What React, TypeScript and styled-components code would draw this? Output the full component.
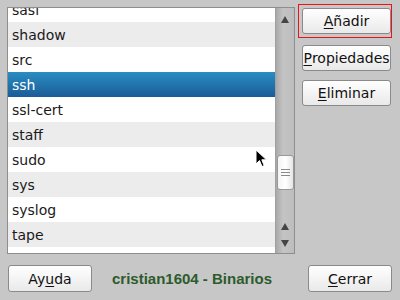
import React from "react";
import styled, { createGlobalStyle } from "styled-components";

const GlobalStyle = createGlobalStyle`
  html, body {
    margin: 0;
    padding: 0;
    background: #c7c7c7;
  }
  * {
    box-sizing: border-box;
  }
`;

const groups = [
  "sasi",
  "shadow",
  "src",
  "ssh",
  "ssl-cert",
  "staff",
  "sudo",
  "sys",
  "syslog",
  "tape",
  "tty",
];

const App: React.FC = () => {
  return (
    <Window>
      <GlobalStyle />
      <TopRow>
        <ListFrame>
          <Viewport>
            <Items>
              {groups.map((g, i) => (
                <Item key={g} $alt={i % 2 === 1} $selected={g === "ssh"}>
                  {g}
                </Item>
              ))}
            </Items>
            <Cursor width="13" height="20" viewBox="0 0 13 20">
              <path
                d="M1 1 L1 15 L4.5 11.5 L7 17.5 L9.2 16.6 L6.8 10.8 L11.5 10.8 Z"
                fill="#000"
                stroke="#fff"
                strokeWidth="1"
                strokeLinejoin="round"
              />
            </Cursor>
          </Viewport>
          <ScrollBar>
            <Arrow $dir="up" />
            <Track>
              <Thumb>
                <Grip />
                <Grip />
                <Grip />
              </Thumb>
            </Track>
            <Arrow $dir="up" />
            <Arrow $dir="down" />
          </ScrollBar>
        </ListFrame>
        <Side>
          <FocusBox>
            <Button $wide>
              <u>A</u>ñadir
            </Button>
          </FocusBox>
          <Button $wide>
            <u>P</u>ropiedades
          </Button>
          <Button $wide>
            <u>E</u>liminar
          </Button>
        </Side>
      </TopRow>
      <Footer>
        <Button>
          Ay<u>u</u>da
        </Button>
        <Title>cristian1604 - Binarios</Title>
        <Button>
          <u>C</u>errar
        </Button>
      </Footer>
    </Window>
  );
};

export default App;

const Window = styled.div`
  width: 400px;
  height: 300px;
  padding: 4px 8px 0 7px;
  display: flex;
  flex-direction: column;
  background: #c7c7c7;
  font-family: "DejaVu Sans", sans-serif;
  overflow: hidden;
`;

const TopRow = styled.div`
  display: flex;
  align-items: flex-start;
`;

const ListFrame = styled.div`
  margin-top: 3px;
  width: 288px;
  height: 247px;
  border: 1px solid #8e8e8e;
  background: #fff;
  display: flex;
`;

const Viewport = styled.div`
  position: relative;
  flex: 1;
  overflow: hidden;
`;

const Items = styled.div`
  margin-top: -11px;
  display: flex;
  flex-direction: column;
`;

const Item = styled.div<{ $alt: boolean; $selected: boolean }>`
  height: 25px;
  padding-left: 4px;
  display: flex;
  align-items: center;
  font-size: 14px;
  color: ${(p) => (p.$selected ? "#fff" : "#1a1a1a")};
  background: ${(p) =>
    p.$selected
      ? "linear-gradient(#2a8dc2, #1a5c98)"
      : p.$alt
      ? "#ececec"
      : "#fff"};
`;

const Cursor = styled.svg`
  position: absolute;
  left: 247px;
  top: 141px;
`;

const ScrollBar = styled.div`
  width: 19px;
  display: flex;
  flex-direction: column;
  align-items: center;
  background: linear-gradient(90deg, #a9a9a9, #c4c4c4 40%, #bdbdbd);
  border-left: 1px solid #a0a0a0;
  padding: 7px 0 5px;
`;

const Arrow = styled.div<{ $dir: "up" | "down" }>`
  width: 0;
  height: 0;
  margin: 1px 0;
  border-left: 4px solid transparent;
  border-right: 4px solid transparent;
  ${(p) =>
    p.$dir === "up"
      ? "border-bottom: 7px solid #454545;"
      : "border-top: 7px solid #454545; margin-top: 9px;"}
`;

const Track = styled.div`
  flex: 1;
  width: 100%;
  padding-top: 131px;
  display: flex;
  justify-content: center;
`;

const Thumb = styled.div`
  width: 17px;
  height: 35px;
  border: 1px solid #999;
  border-radius: 3px;
  background: linear-gradient(90deg, #f4f4f4, #ffffff 50%, #e6e6e6);
  display: flex;
  flex-direction: column;
  align-items: center;
  justify-content: center;
  gap: 2px;
`;

const Grip = styled.div`
  width: 9px;
  height: 1px;
  background: #8a8a8a;
`;

const Side = styled.div`
  margin-left: 3px;
  display: flex;
  flex-direction: column;
  gap: 9px;
`;

const FocusBox = styled.div`
  border: 1px solid #e8141c;
  padding: 3px 0 3px 3px;
  margin-bottom: -2px;
`;

const Button = styled.button<{ $wide?: boolean }>`
  width: ${(p) => (p.$wide ? "89px" : "84px")};
  height: ${(p) => (p.$wide ? "26px" : "27px")};
  margin-left: ${(p) => (p.$wide ? "4px" : "0")};
  padding: 0;
  border: 1px solid #8a8a8a;
  border-radius: 3px;
  background: linear-gradient(#ffffff, #e9e9e9);
  font-family: "DejaVu Sans", sans-serif;
  font-size: 14px;
  line-height: 16px;
  color: #111;
  display: flex;
  align-items: center;
  justify-content: center;

  u {
    text-decoration: underline;
    text-underline-offset: 2px;
  }

  ${FocusBox} & {
    margin-left: 0;
  }
`;

const Footer = styled.div`
  margin-top: 11px;
  padding-left: 1px;
  display: flex;
  align-items: center;
  justify-content: space-between;
`;

const Title = styled.div`
  flex: 1;
  text-align: center;
  padding-right: 16px;
  font-family: "Liberation Sans", Arial, sans-serif;
  font-weight: bold;
  font-size: 15px;
  color: #2c5b2c;
`;
